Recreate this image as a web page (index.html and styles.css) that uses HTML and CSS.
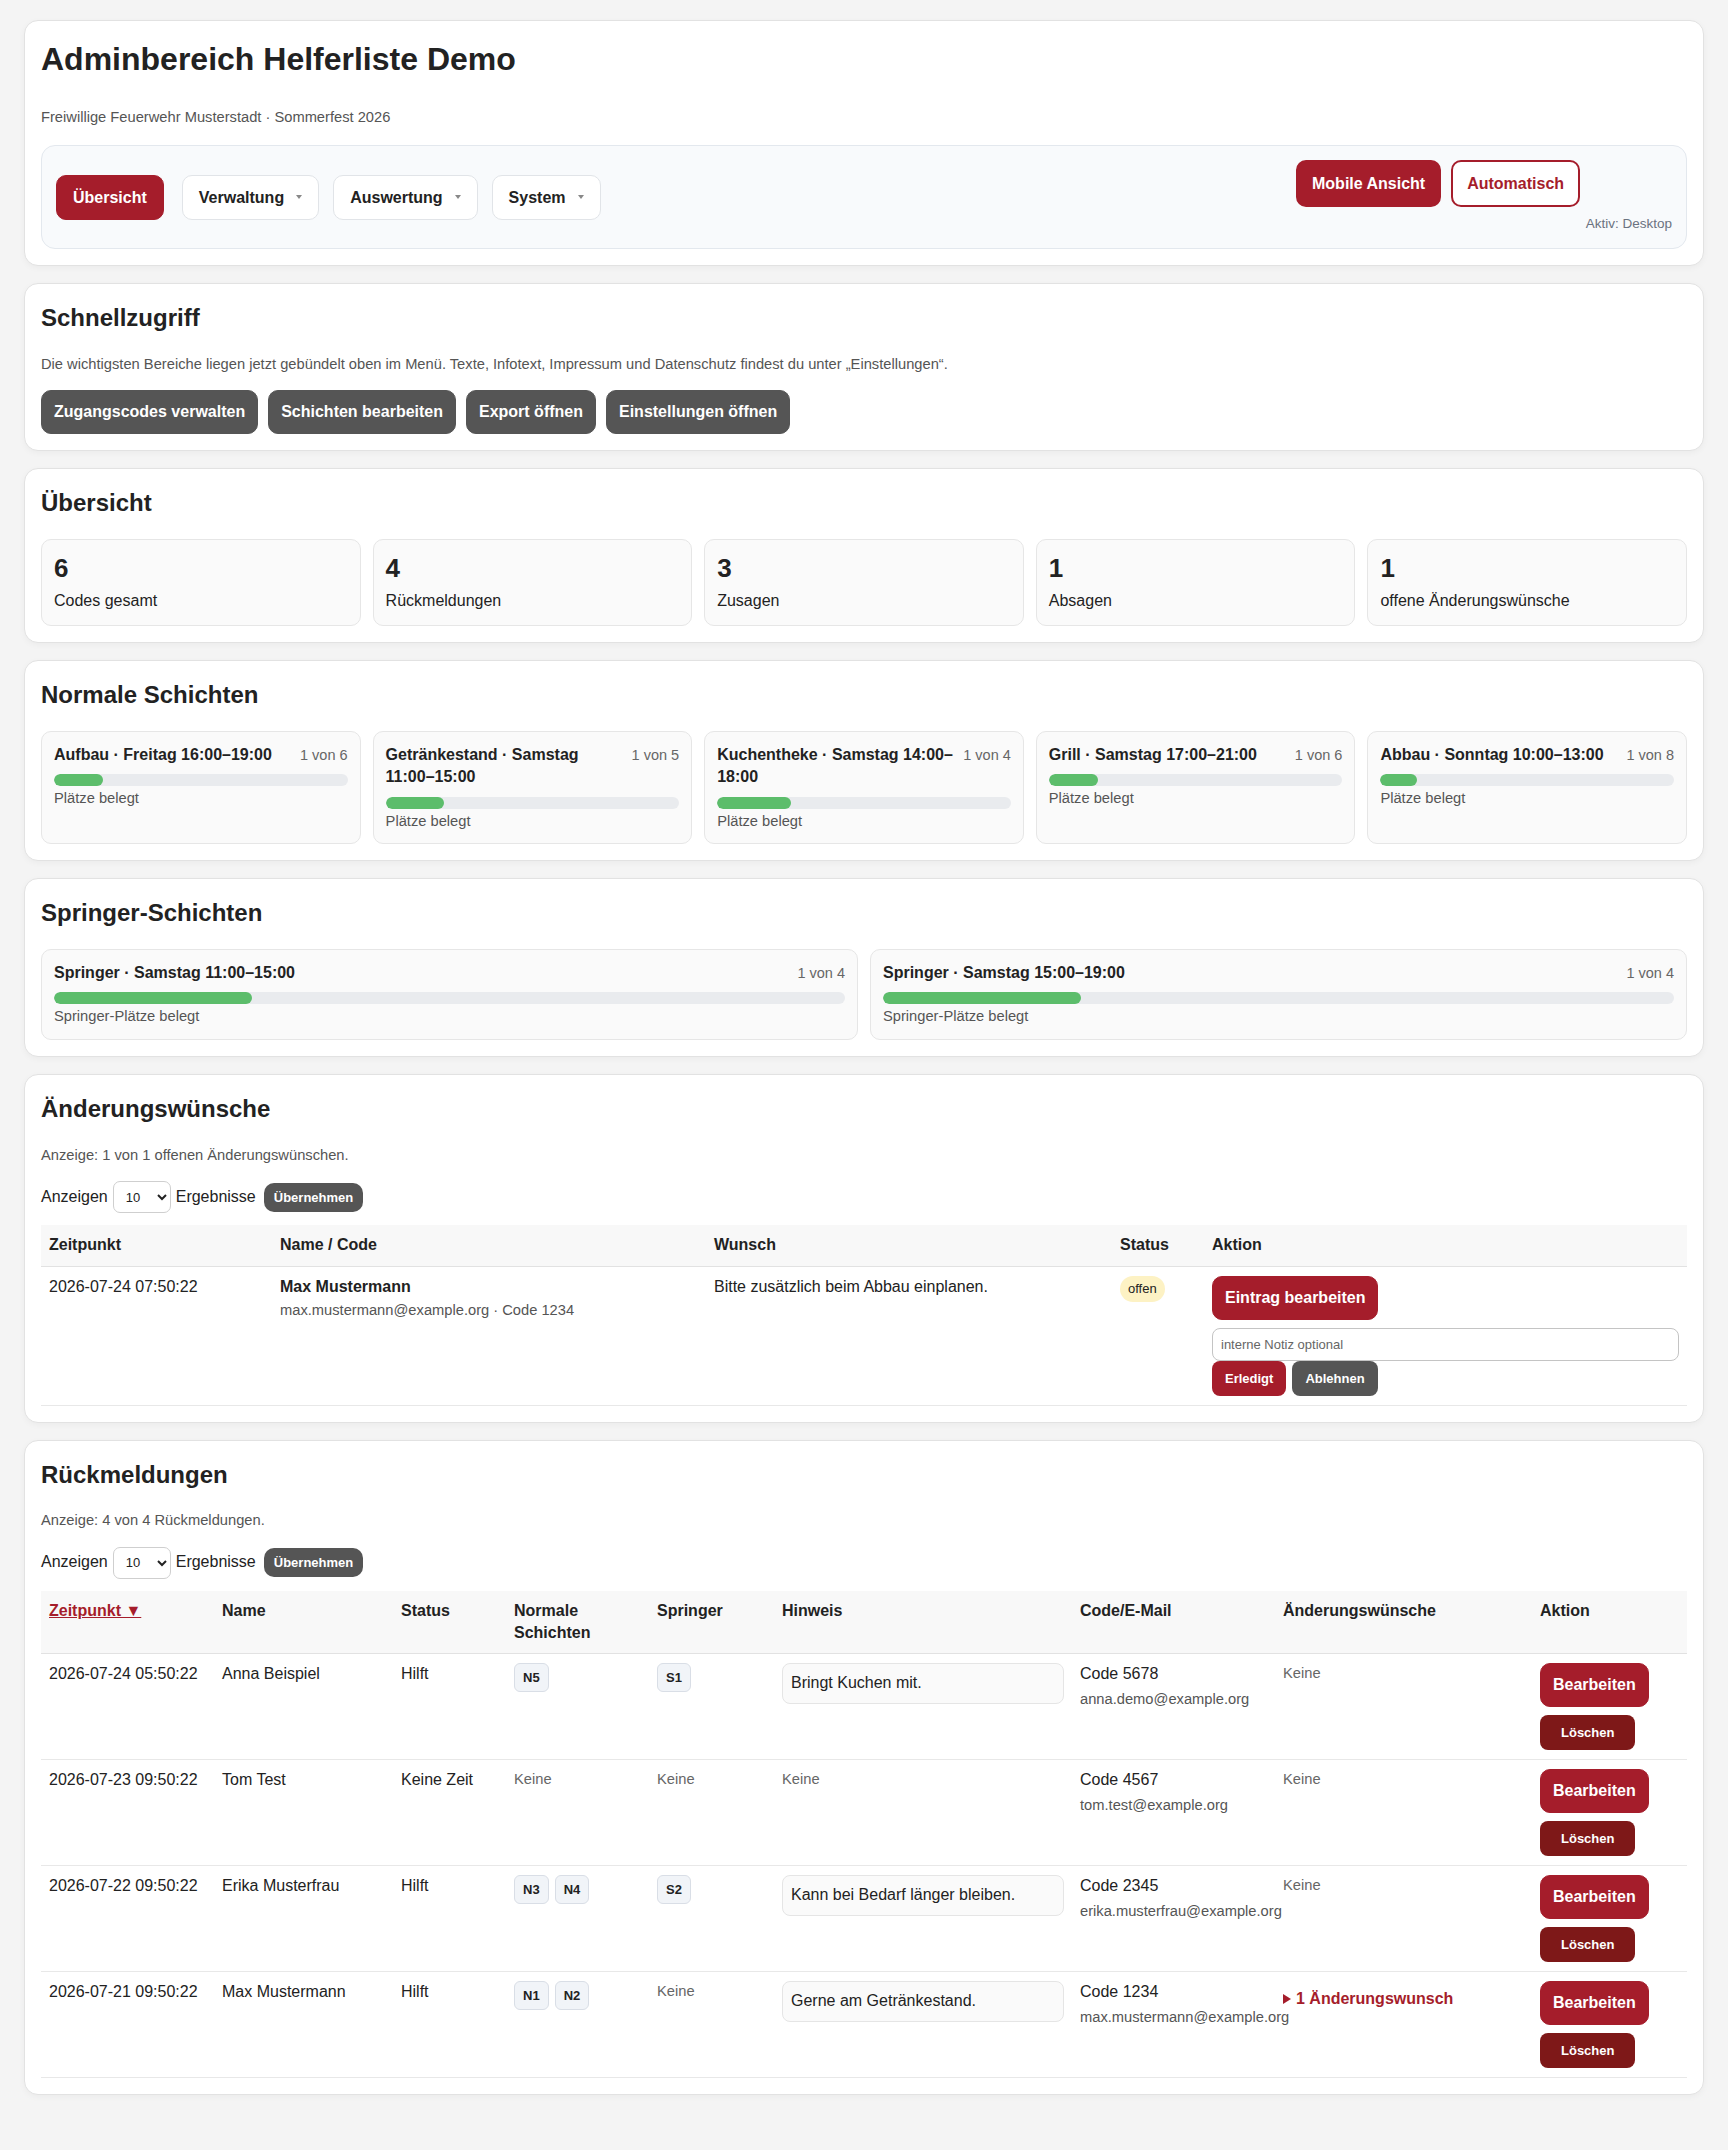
FILE: index.html
```html
<!DOCTYPE html>
<html lang="de">
<head>
  <meta charset="UTF-8" />
  <meta name="viewport" content="width=device-width, initial-scale=1.0" />
  <title>Adminbereich Helferliste Demo</title>
  <link rel="stylesheet" href="styles.css">
</head>
<body>

  <section class="card">
    <h1>Adminbereich Helferliste Demo</h1>
    <p class="subtitle">Freiwillige Feuerwehr Musterstadt · Sommerfest 2026</p>

    <nav class="topnav">
      <div class="nav-left">
        <a class="nav-btn active" href="#">Übersicht</a>
        <a class="nav-btn" href="#">Verwaltung <span class="caret"></span></a>
        <a class="nav-btn" href="#">Auswertung <span class="caret"></span></a>
        <a class="nav-btn" href="#">System <span class="caret"></span></a>
      </div>
      <div class="nav-right">
        <div class="view-btns">
          <a class="view-btn filled" href="#">Mobile Ansicht</a>
          <a class="view-btn outline" href="#">Automatisch</a>
        </div>
        <div class="view-state">Aktiv: Desktop</div>
      </div>
    </nav>
  </section>

  <section class="card">
    <h2>Schnellzugriff</h2>
    <p class="muted">Die wichtigsten Bereiche liegen jetzt gebündelt oben im Menü. Texte, Infotext, Impressum und Datenschutz findest du unter „Einstellungen“.</p>
    <div class="quick">
      <a class="btn btn-dark" href="#">Zugangscodes verwalten</a>
      <a class="btn btn-dark" href="#">Schichten bearbeiten</a>
      <a class="btn btn-dark" href="#">Export öffnen</a>
      <a class="btn btn-dark" href="#">Einstellungen öffnen</a>
    </div>
  </section>

  <section class="card">
    <h2>Übersicht</h2>
    <div class="stats">
      <div class="stat"><div class="stat-num">6</div><div class="stat-label">Codes gesamt</div></div>
      <div class="stat"><div class="stat-num">4</div><div class="stat-label">Rückmeldungen</div></div>
      <div class="stat"><div class="stat-num">3</div><div class="stat-label">Zusagen</div></div>
      <div class="stat"><div class="stat-num">1</div><div class="stat-label">Absagen</div></div>
      <div class="stat"><div class="stat-num">1</div><div class="stat-label">offene Änderungswünsche</div></div>
    </div>
  </section>

  <section class="card">
    <h2>Normale Schichten</h2>
    <div class="shifts five">
      <div class="shift">
        <div class="shift-head"><span class="shift-title">Aufbau · Freitag 16:00–19:00</span><span class="shift-count">1 von 6</span></div>
        <div class="bar"><div class="bar-fill" style="width: 16.7%"></div></div>
        <div class="shift-label">Plätze belegt</div>
      </div>
      <div class="shift">
        <div class="shift-head"><span class="shift-title">Getränkestand · Samstag 11:00–15:00</span><span class="shift-count">1 von 5</span></div>
        <div class="bar"><div class="bar-fill" style="width: 20%"></div></div>
        <div class="shift-label">Plätze belegt</div>
      </div>
      <div class="shift">
        <div class="shift-head"><span class="shift-title">Kuchentheke · Samstag 14:00–18:00</span><span class="shift-count">1 von 4</span></div>
        <div class="bar"><div class="bar-fill" style="width: 25%"></div></div>
        <div class="shift-label">Plätze belegt</div>
      </div>
      <div class="shift">
        <div class="shift-head"><span class="shift-title">Grill · Samstag 17:00–21:00</span><span class="shift-count">1 von 6</span></div>
        <div class="bar"><div class="bar-fill" style="width: 16.7%"></div></div>
        <div class="shift-label">Plätze belegt</div>
      </div>
      <div class="shift">
        <div class="shift-head"><span class="shift-title">Abbau · Sonntag 10:00–13:00</span><span class="shift-count">1 von 8</span></div>
        <div class="bar"><div class="bar-fill" style="width: 12.5%"></div></div>
        <div class="shift-label">Plätze belegt</div>
      </div>
    </div>
  </section>

  <section class="card">
    <h2>Springer-Schichten</h2>
    <div class="shifts two">
      <div class="shift">
        <div class="shift-head"><span class="shift-title">Springer · Samstag 11:00–15:00</span><span class="shift-count">1 von 4</span></div>
        <div class="bar"><div class="bar-fill" style="width: 25%"></div></div>
        <div class="shift-label">Springer-Plätze belegt</div>
      </div>
      <div class="shift">
        <div class="shift-head"><span class="shift-title">Springer · Samstag 15:00–19:00</span><span class="shift-count">1 von 4</span></div>
        <div class="bar"><div class="bar-fill" style="width: 25%"></div></div>
        <div class="shift-label">Springer-Plätze belegt</div>
      </div>
    </div>
  </section>

  <section class="card">
    <h2>Änderungswünsche</h2>
    <p class="muted">Anzeige: 1 von 1 offenen Änderungswünschen.</p>
    <form class="limit">
      <span>Anzeigen</span>
      <select><option>10</option><option>25</option><option>50</option></select>
      <span>Ergebnisse</span>
      <button class="btn-small btn-dark" type="button">Übernehmen</button>
    </form>
    <table class="list">
      <colgroup>
        <col style="width: 231px"><col style="width: 434px"><col style="width: 406px"><col style="width: 92px"><col style="width: 483px">
      </colgroup>
      <thead>
        <tr><th>Zeitpunkt</th><th>Name / Code</th><th>Wunsch</th><th>Status</th><th>Aktion</th></tr>
      </thead>
      <tbody>
        <tr>
          <td>2026-07-24 07:50:22</td>
          <td><strong>Max Mustermann</strong><div class="sub">max.mustermann@example.org · Code 1234</div></td>
          <td>Bitte zusätzlich beim Abbau einplanen.</td>
          <td><span class="pill">offen</span></td>
          <td>
            <a class="btn btn-red" href="#">Eintrag bearbeiten</a>
            <input class="note" type="text" placeholder="interne Notiz optional">
            <div class="note-actions">
              <button class="btn-small btn-red" type="button">Erledigt</button>
              <button class="btn-small btn-dark" type="button">Ablehnen</button>
            </div>
          </td>
        </tr>
      </tbody>
    </table>
  </section>

  <section class="card">
    <h2>Rückmeldungen</h2>
    <p class="muted">Anzeige: 4 von 4 Rückmeldungen.</p>
    <form class="limit">
      <span>Anzeigen</span>
      <select><option>10</option><option>25</option><option>50</option></select>
      <span>Ergebnisse</span>
      <button class="btn-small btn-dark" type="button">Übernehmen</button>
    </form>
    <table class="list">
      <colgroup>
        <col style="width: 173px"><col style="width: 179px"><col style="width: 113px"><col style="width: 143px"><col style="width: 125px"><col style="width: 298px"><col style="width: 203px"><col style="width: 257px"><col style="width: 155px">
      </colgroup>
      <thead>
        <tr>
          <th><a class="sort" href="#">Zeitpunkt ▼</a></th>
          <th>Name</th>
          <th>Status</th>
          <th>Normale Schichten</th>
          <th>Springer</th>
          <th>Hinweis</th>
          <th>Code/E-Mail</th>
          <th>Änderungswünsche</th>
          <th>Aktion</th>
        </tr>
      </thead>
      <tbody>
        <tr>
          <td>2026-07-24 05:50:22</td>
          <td>Anna Beispiel</td>
          <td>Hilft</td>
          <td><span class="tag">N5</span></td>
          <td><span class="tag">S1</span></td>
          <td><div class="hint">Bringt Kuchen mit.</div></td>
          <td>Code 5678<div class="sub mail">anna.demo@example.org</div></td>
          <td class="none">Keine</td>
          <td><div class="row-actions"><a class="btn btn-red" href="#">Bearbeiten</a><button class="btn-small btn-del" type="button">Löschen</button></div></td>
        </tr>
        <tr>
          <td>2026-07-23 09:50:22</td>
          <td>Tom Test</td>
          <td>Keine Zeit</td>
          <td class="none">Keine</td>
          <td class="none">Keine</td>
          <td class="none">Keine</td>
          <td>Code 4567<div class="sub mail">tom.test@example.org</div></td>
          <td class="none">Keine</td>
          <td><div class="row-actions"><a class="btn btn-red" href="#">Bearbeiten</a><button class="btn-small btn-del" type="button">Löschen</button></div></td>
        </tr>
        <tr>
          <td>2026-07-22 09:50:22</td>
          <td>Erika Musterfrau</td>
          <td>Hilft</td>
          <td><span class="tag">N3</span><span class="tag">N4</span></td>
          <td><span class="tag">S2</span></td>
          <td><div class="hint">Kann bei Bedarf länger bleiben.</div></td>
          <td>Code 2345<div class="sub mail">erika.musterfrau@example.org</div></td>
          <td class="none">Keine</td>
          <td><div class="row-actions"><a class="btn btn-red" href="#">Bearbeiten</a><button class="btn-small btn-del" type="button">Löschen</button></div></td>
        </tr>
        <tr>
          <td>2026-07-21 09:50:22</td>
          <td>Max Mustermann</td>
          <td>Hilft</td>
          <td><span class="tag">N1</span><span class="tag">N2</span></td>
          <td class="none">Keine</td>
          <td><div class="hint">Gerne am Getränkestand.</div></td>
          <td>Code 1234<div class="sub mail">max.mustermann@example.org</div></td>
          <td>
            <details class="wish">
              <summary><span class="tri"></span>1 Änderungswunsch</summary>
              <p>Bitte zusätzlich beim Abbau einplanen.</p>
            </details>
          </td>
          <td><div class="row-actions"><a class="btn btn-red" href="#">Bearbeiten</a><button class="btn-small btn-del" type="button">Löschen</button></div></td>
        </tr>
      </tbody>
    </table>
  </section>

</body>
</html>
```

FILE: styles.css
```css
* {
  box-sizing: border-box;
}

body {
  margin: 0;
  padding: 20px 24px 24px;
  background: #f4f4f4;
  color: #222;
  font-family: "Liberation Sans", Arial, Helvetica, sans-serif;
  font-size: 16px;
  line-height: 1.4;
}

a {
  text-decoration: none;
  color: inherit;
}

.card {
  background: #fff;
  border: 1px solid #e2e2e2;
  border-radius: 14px;
  box-shadow: 0 2px 6px rgba(0, 0, 0, 0.04);
  padding: 16px;
  margin-bottom: 17px;
}

h1 {
  margin: 2px 0 0;
  font-size: 32px;
  line-height: 1.3;
}

h2 {
  margin: 0 0 19px;
  padding-top: 1px;
  font-size: 24px;
  line-height: 1.4;
}

.subtitle {
  margin: 26px 0 0;
  font-size: 14.7px;
  color: #555;
}

.muted {
  margin: 0 0 16px;
  font-size: 14.7px;
  color: #555;
}

/* top navigation */
.topnav {
  margin-top: 18px;
  background: #f8fafc;
  border: 1px solid #e3e8ee;
  border-radius: 14px;
  padding: 14px;
  display: flex;
  justify-content: space-between;
  align-items: center;
}

.nav-left {
  display: flex;
  gap: 14px;
}

.nav-btn {
  display: inline-flex;
  align-items: center;
  padding: 12px 16px;
  border: 1px solid #e1e4e8;
  border-radius: 10px;
  background: #fff;
  font-weight: bold;
  line-height: 19px;
  color: #222;
}

.nav-btn.active {
  margin-right: 4px;
  background: #a51d2b;
  border-color: #a51d2b;
  color: #fff;
}

.caret {
  display: inline-block;
  margin-left: 12px;
  width: 0;
  height: 0;
  border-left: 3.5px solid transparent;
  border-right: 3.5px solid transparent;
  border-top: 4px solid #888;
}

.nav-right {
  width: 376px;
  display: flex;
  flex-direction: column;
}

.view-btns {
  display: flex;
  gap: 10px;
}

.view-btn {
  padding: 12px 14px;
  border: 2px solid #a51d2b;
  border-radius: 10px;
  font-weight: bold;
  line-height: 19px;
}

.view-btn.filled {
  background: #a51d2b;
  color: #fff;
}

.view-btn.outline {
  background: #fff;
  color: #a51d2b;
}

.view-state {
  margin-top: 8px;
  text-align: right;
  font-size: 13.5px;
  color: #6b7280;
}

/* buttons */
.btn {
  display: inline-block;
  padding: 12px;
  border: 1px solid transparent;
  border-radius: 10px;
  font-weight: bold;
  color: #fff;
  line-height: 18px;
}

.btn-dark {
  background: #555;
  border-color: #555;
  color: #fff;
}

.btn-red {
  background: #a51d2b;
  border-color: #a51d2b;
  color: #fff;
}

.btn-small {
  font-family: inherit;
  font-size: 13px;
  font-weight: bold;
  line-height: 15px;
  padding: 7px 10px;
  border: 0;
  border-radius: 10px;
  color: #fff;
  cursor: pointer;
}

.btn-del {
  background: #7e1818;
  padding: 10px 21px;
  border-radius: 8px;
}

.quick {
  display: flex;
  flex-wrap: wrap;
  gap: 10px;
}

/* stats */
.stats {
  display: grid;
  grid-template-columns: repeat(5, 1fr);
  gap: 12px;
}

.stat {
  background: #fafafa;
  border: 1px solid #e6e6e6;
  border-radius: 10px;
  padding: 13px 12px;
}

.stat-num {
  font-size: 26px;
  font-weight: bold;
  line-height: 1.2;
}

.stat-label {
  margin-top: 6px;
}

/* shifts */
.shifts {
  display: grid;
  gap: 12px;
}

.shifts.five {
  grid-template-columns: repeat(5, 1fr);
}

.shifts.two {
  grid-template-columns: repeat(2, 1fr);
}

.shift {
  background: #fafafa;
  border: 1px solid #e6e6e6;
  border-radius: 10px;
  padding: 12px;
}

.shift-head {
  display: flex;
  justify-content: space-between;
  align-items: flex-start;
  gap: 6px;
}

.shift-title {
  font-weight: bold;
  min-width: 0;
}

.shift-count {
  flex-shrink: 0;
  white-space: nowrap;
  font-size: 14.5px;
  line-height: 22.4px;
  color: #666;
}

.bar {
  margin-top: 8px;
  height: 12px;
  border-radius: 99px;
  background: #e9ebee;
  overflow: hidden;
}

.bar-fill {
  height: 100%;
  border-radius: 99px;
  background: #5cbd6b;
}

.shift-label {
  margin-top: 2px;
  font-size: 14.7px;
  color: #555;
}

/* limit form */
.limit {
  display: flex;
  align-items: center;
  gap: 5px;
  margin-bottom: 12px;
}

.limit select {
  width: 58px;
  height: 32px;
  font-family: inherit;
  font-size: 13px;
  padding: 0 4px 0 8px;
  border: 1px solid #cfcfcf;
  border-radius: 7px;
  background: #fff;
  color: #222;
}

.limit .btn-small {
  margin-left: 3px;
}

/* tables */
.list {
  width: 100%;
  border-collapse: collapse;
  table-layout: fixed;
}

.list th,
.list td {
  padding: 9px 8px;
  text-align: left;
  vertical-align: top;
}

.list th {
  background: #f8f8f8;
  border-bottom: 1px solid #e2e2e2;
  font-weight: bold;
}

.list td {
  border-bottom: 1px solid #e8e8e8;
}

.sort {
  color: #a51d2b;
  text-decoration: underline;
}

.sub {
  margin-top: 2px;
  font-size: 14.7px;
  color: #555;
}

.sub.mail {
  margin-top: 3px;
  white-space: nowrap;
}

.none {
  font-size: 14.7px;
  color: #666;
}

.pill {
  display: inline-block;
  padding: 4px 8px;
  border-radius: 99px;
  background: #fdf2c4;
  font-size: 13px;
  line-height: 18px;
}

.note {
  display: block;
  width: 100%;
  height: 33px;
  margin-top: 8px;
  padding: 0 8px;
  border: 1px solid #c4c4c4;
  border-radius: 8px;
  font-family: inherit;
  font-size: 13px;
}

.note::placeholder {
  color: #666;
}

.note-actions {
  display: flex;
  gap: 6px;
}

.note-actions .btn-small {
  padding: 10px 13px;
  border-radius: 8px;
}

.tag {
  display: inline-block;
  margin-right: 6px;
  padding: 6px 8px;
  background: #f1f4f8;
  border: 1px solid #d9dee6;
  border-radius: 6px;
  font-size: 13px;
  font-weight: bold;
  line-height: 15px;
}

.hint {
  padding: 8px;
  background: #fafafa;
  border: 1px solid #e5e5e5;
  border-radius: 8px;
}

.row-actions {
  display: flex;
  flex-direction: column;
  align-items: flex-start;
  gap: 8px;
}

.wish summary {
  list-style: none;
  padding-top: 7px;
  color: #a51d2b;
  font-weight: bold;
  font-size: 16px;
  cursor: pointer;
}

.wish summary::-webkit-details-marker {
  display: none;
}

.tri {
  display: inline-block;
  margin-right: 5px;
  width: 0;
  height: 0;
  border-top: 5px solid transparent;
  border-bottom: 5px solid transparent;
  border-left: 8px solid #a51d2b;
}

.wish p {
  margin: 6px 0 0;
  font-size: 14.7px;
}
```
